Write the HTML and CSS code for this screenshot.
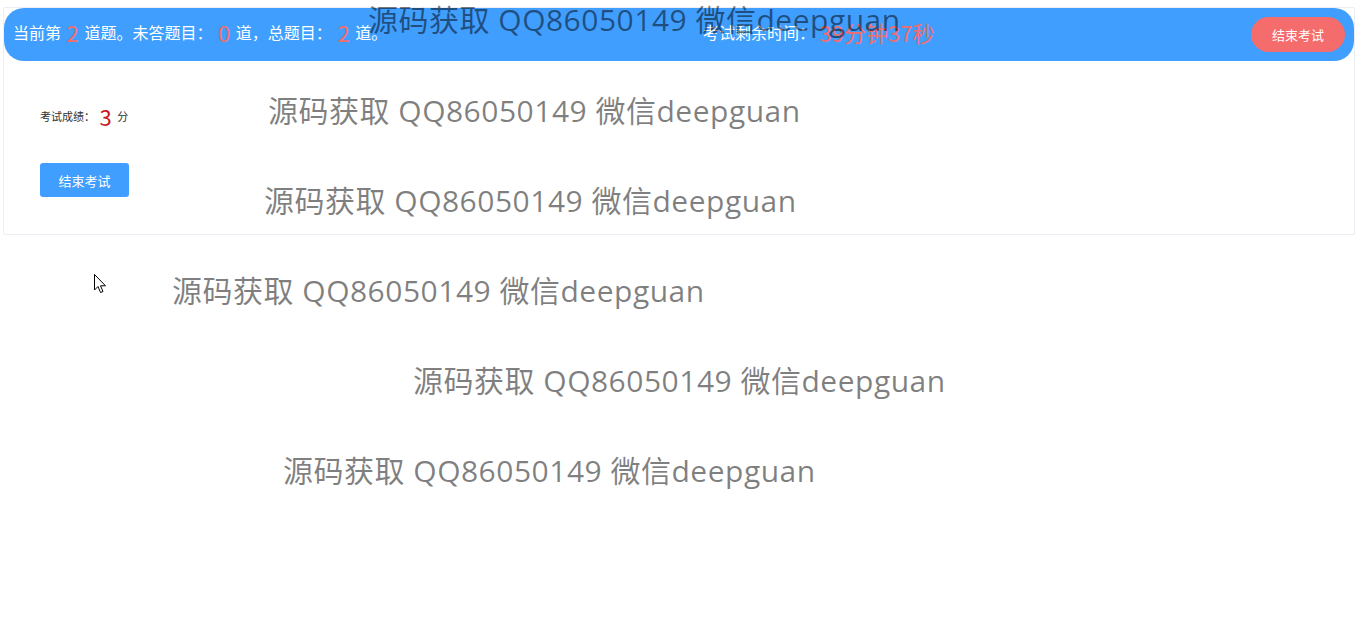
FILE: index.html
```html
<!DOCTYPE html>
<html lang="zh">
<head>
<meta charset="utf-8">
<title>考试</title>
<link rel="stylesheet" href="styles.css">
</head>
<body>
<div class="card">
  <div class="bar">
    <div class="bar-info">当前第 <span class="num">2</span> 道题。未答题目： <span class="num">0</span> 道，总题目： <span class="num">2</span> 道。</div>
    <div class="bar-timer">考试剩余时间： <span class="num time">39分钟37秒</span></div>
    <button class="btn-end">结束考试</button>
  </div>
  <div class="result">
    <div class="score">考试成绩： <span class="score-num">3</span> 分</div>
    <button class="btn-primary">结束考试</button>
  </div>
</div>

<div class="wm wm1">源码获取 QQ86050149 微信deepguan</div>
<div class="wm wm2">源码获取 QQ86050149 微信deepguan</div>
<div class="wm wm3">源码获取 QQ86050149 微信deepguan</div>
<div class="wm wm4">源码获取 QQ86050149 微信deepguan</div>
<div class="wm wm5">源码获取 QQ86050149 微信deepguan</div>
<div class="wm wm6">源码获取 QQ86050149 微信deepguan</div>

<svg class="cursor" width="13" height="20" viewBox="0 0 13 20">
  <path d="M0.5 0.5 L0.5 16 L4 12.5 L6.5 18.5 L9 17.5 L6.5 11.8 L11.5 11.8 Z" fill="#fff" stroke="#000" stroke-width="1" stroke-linejoin="miter"/>
</svg>
</body>
</html>
```

FILE: styles.css
```css
html, body {
  margin: 0;
  padding: 0;
  background: #fff;
}
body {
  font-family: "Noto Sans CJK SC", "Noto Sans", sans-serif;
  color: #303133;
  position: relative;
  height: 622px;
  overflow: hidden;
}
.card {
  margin: 7px 3px 0 3px;
  border: 1px solid #ebeef5;
  border-radius: 2px;
  height: 226px;
  box-sizing: content-box;
}
.bar {
  height: 53px;
  background: #409eff;
  border-radius: 20px;
  display: grid;
  grid-template-columns: 690px 1fr auto;
  align-items: center;
  padding: 0 9px;
  color: #fff;
  font-size: 16px;
  white-space: nowrap;
}
.bar-info, .bar-timer {
  line-height: 24px;
  display: flex;
  align-items: center;
  white-space: pre;
  margin-bottom: 6px;
}
.num {
  color: #f56c6c;
  font-size: 22px;
  line-height: 24px;
  margin: 0 2px;
  font-family: "Noto Sans CJK SC", sans-serif;
}
.num.time {
  font-size: 22px;
  margin-left: 1px;
}
.btn-end {
  width: 94px;
  height: 35px;
  border: none;
  border-radius: 18px;
  background: #f56c6c;
  color: #fff;
  font-family: "Noto Sans CJK SC", sans-serif;
  font-size: 13px;
  padding: 0;
}
.result {
  padding: 42px 0 0 36px;
  display: flex;
  flex-direction: column;
  align-items: flex-start;
  gap: 34px;
}
.score {
  font-size: 11px;
  color: #303133;
  height: 26px;
  display: flex;
  align-items: center;
  white-space: pre;
}
.score-num {
  color: #c8161d;
  font-size: 22px;
  margin: 0 3px 0 2px;
}
.btn-primary {
  width: 89px;
  height: 34px;
  border: none;
  border-radius: 3px;
  background: #409eff;
  color: #fff;
  font-family: "Noto Sans CJK SC", sans-serif;
  font-size: 13px;
  padding: 0;
}
.wm {
  position: absolute;
  font-family: "Open Sans", "Noto Sans CJK SC", sans-serif;
  font-size: 30px;
  letter-spacing: 0.5px;
  line-height: 40px;
  color: rgba(0, 0, 0, 0.5);
  white-space: nowrap;
  pointer-events: none;
}
.wm1 { left: 368px; top: 0px; }
.wm2 { left: 268px; top: 91px; }
.wm3 { left: 264px; top: 181px; }
.wm4 { left: 172px; top: 271px; }
.wm5 { left: 413px; top: 361px; }
.wm6 { left: 283px; top: 451px; }
.cursor {
  position: absolute;
  left: 94px;
  top: 274px;
}
```
